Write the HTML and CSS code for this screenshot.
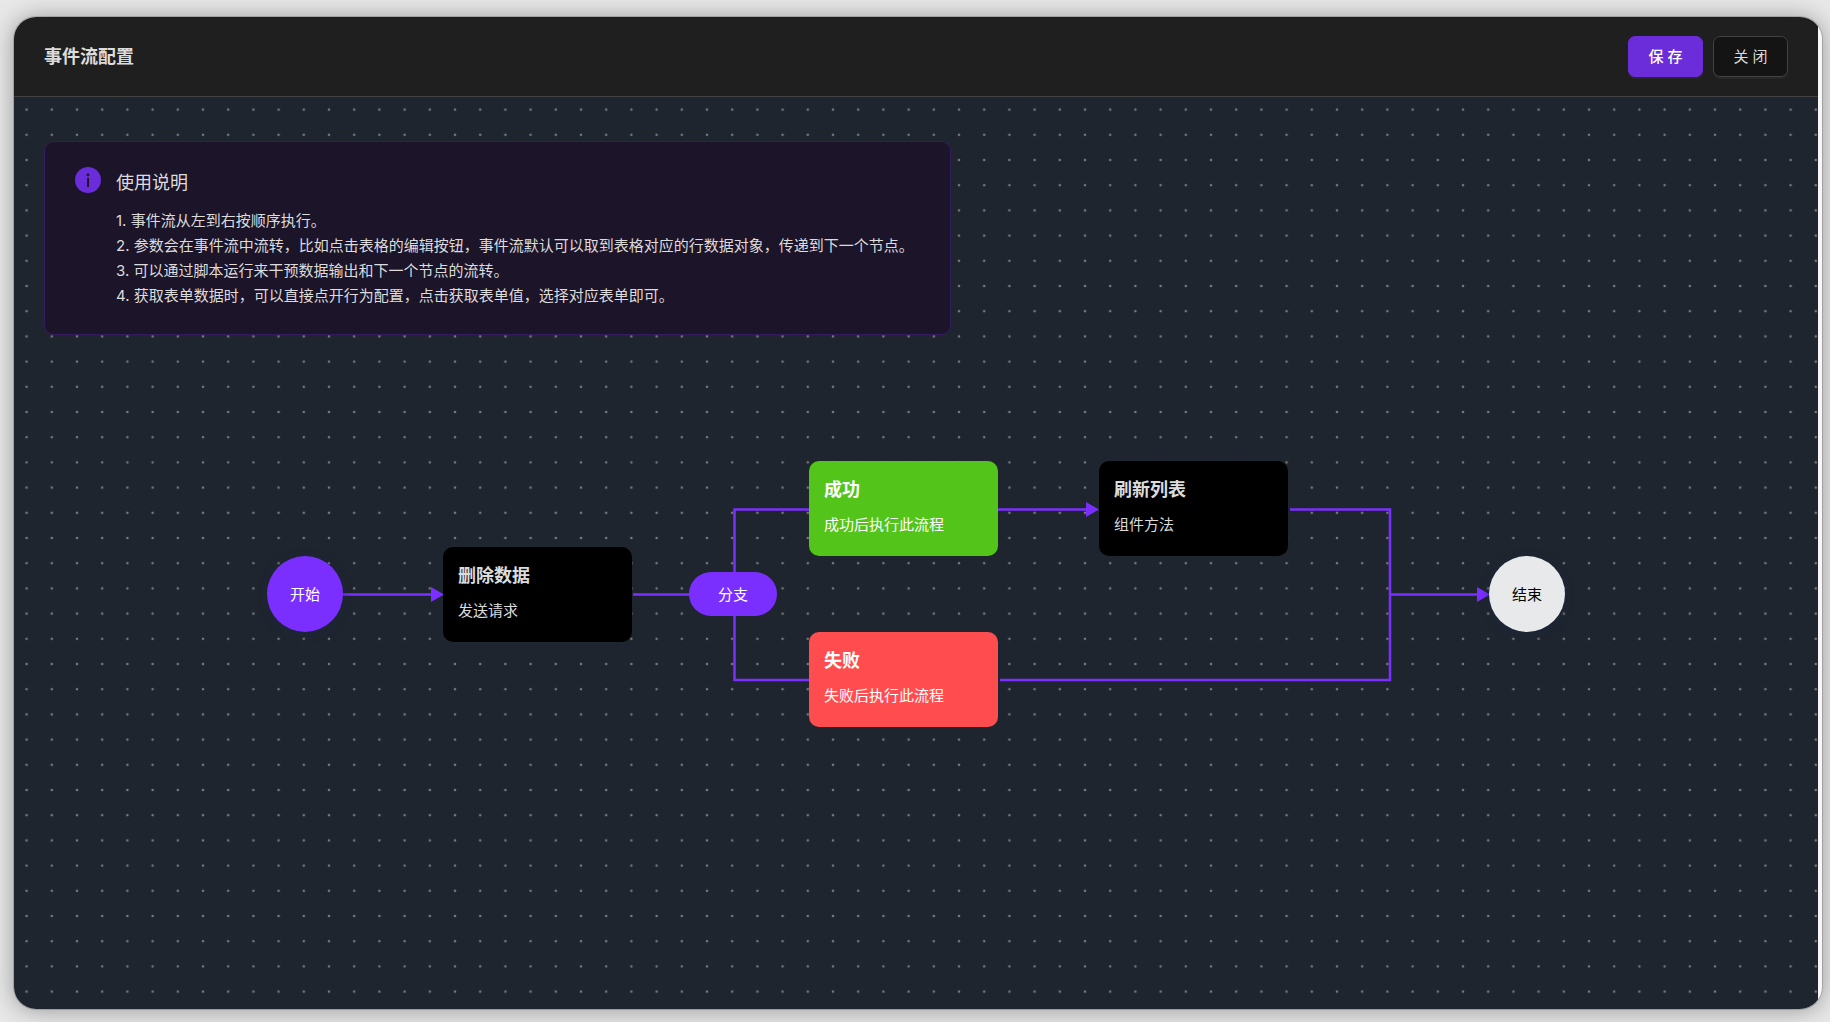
FILE: index.html
```html
<!DOCTYPE html>
<html lang="zh-CN">
<head>
<meta charset="utf-8">
<meta name="viewport" content="width=device-width, initial-scale=1">
<title>事件流配置</title>
<link rel="stylesheet" href="styles.css">
</head>
<body>
<div class="window">
  <header class="header">
    <h1 class="title">事件流配置</h1>
    <div class="actions">
      <button class="btn btn-primary" type="button">保 存</button>
      <button class="btn btn-default" type="button">关 闭</button>
    </div>
  </header>
  <main class="canvas">
    <svg class="layer" aria-hidden="true">
      <defs>
        <pattern id="dots" width="20" height="20" patternUnits="userSpaceOnUse" patternTransform="scale(1.26)">
          <circle cx="10" cy="10" r="1" fill="#7a7a78"/>
        </pattern>
      </defs>
      <rect width="100%" height="100%" fill="url(#dots)"/>
    </svg>

    <section class="notice">
      <svg class="notice-icon" viewBox="0 0 26 26" aria-hidden="true">
        <circle cx="13" cy="13" r="13" fill="currentColor"/>
        <circle class="notice-mark" cx="13" cy="8" r="1.400"/>
        <rect class="notice-mark" x="12" y="11" width="2" height="9"/>
      </svg>
      <div class="notice-body">
        <h2 class="notice-title">使用说明</h2>
        <p class="line">1. 事件流从左到右按顺序执行。</p>
        <p class="line">2. 参数会在事件流中流转，比如点击表格的编辑按钮，事件流默认可以取到表格对应的行数据对象，传递到下一个节点。</p>
        <p class="line">3. 可以通过脚本运行来干预数据输出和下一个节点的流转。</p>
        <p class="line">4. 获取表单数据时，可以直接点开行为配置，点击获取表单值，选择对应表单即可。</p>
      </div>
    </section>

    <svg class="layer edges" aria-hidden="true">
      <path class="edge" d="M328 497.500H418M619 497.500H676M720.500 476V412.500H796M720.500 518V583H796M984 412.500H1074M1276 412.500H1376V583H986M1376 497.500H1464"/>
      <path class="arrow" d="M417 490l13 7.500-13 7.500zM1072 405l13 7.500-13 7.500zM1463 490l13 7.500-13 7.500z"/>
    </svg>
    <div class="node round start">开始</div>
    <div class="node card request"><h3 class="card-title">删除数据</h3><p class="card-text">发送请求</p></div>
    <button class="node branch" type="button">分支</button>
    <div class="node card success"><h3 class="card-title">成功</h3><p class="card-text">成功后执行此流程</p></div>
    <div class="node card failure"><h3 class="card-title">失败</h3><p class="card-text">失败后执行此流程</p></div>
    <div class="node card refresh"><h3 class="card-title">刷新列表</h3><p class="card-text">组件方法</p></div>
    <div class="node round end">结束</div>
  </main>
</div>
</body>
</html>
```
FILE: styles.css
```css
* { box-sizing: border-box; }

body {
  display: flex;
  min-height: 100vh;
  margin: 0;
  padding: 17px 8px 13px 14px;
  background: #e8e8e8;
  color: #dcdcdd;
  font-family: Inter, "Noto Sans CJK SC", sans-serif;
  font-size: 15px;
  line-height: 25px;
}

h1, h2, h3, p { margin: 0; }
button { font: inherit; }

.window {
  display: flex;
  flex: 1;
  flex-direction: column;
  min-width: 0;
  padding-right: 4px;
  overflow: hidden;
  border-radius: 22px;
  background: #f7f7f7;
  box-shadow: 0 0 0 1px rgba(0, 0, 0, 0.16), 0 1px 24px rgba(0, 0, 0, 0.36);
}

.header {
  display: flex;
  align-items: center;
  justify-content: space-between;
  height: 80px;
  padding: 0 30px 1px;
  border-bottom: 1px solid #424242;
  background: #1f1f1f;
}

.title { font-size: 18px; font-weight: 700; }
.actions { display: flex; gap: 10px; }

.btn {
  width: 75px;
  height: 41px;
  padding: 0;
  border: 1px solid #424242;
  border-radius: 7px;
  box-shadow: 0 2px 0 rgba(255, 255, 255, 0.04);
}
.btn-primary { border-color: #6b2cda; background: #6b2cda; color: #fff; font-weight: 500; }
.btn-default { background: #141414; color: #dcdcdc; }

.canvas {
  position: relative;
  flex: 1;
  padding: 44px 30px;
  background: #1f252f;
}

.layer {
  position: absolute;
  inset: 0;
  width: 100%;
  height: 100%;
}

.notice {
  position: relative;
  display: flex;
  gap: 15px;
  width: 907px;
  max-width: 100%;
  padding: 25px 30px;
  border: 1px solid #351b64;
  border-radius: 10px;
  background: #1c1429;
}
.notice-icon { flex: none; width: 26px; height: 26px; color: #6b2cda; }
.notice-mark { fill: #1c1429; }
.notice-body { min-width: 0; padding-bottom: 1px; }
.notice-title { margin: 3px 0 12px; font-size: 18px; font-weight: 400; line-height: 26px; }

.edges { overflow: hidden; }
.edge { fill: none; stroke: #7b2fff; stroke-width: 2.5; }
.arrow { fill: #7b2fff; }

/* Flow nodes, placed on the free canvas */
.node { position: absolute; }

.round {
  display: flex;
  align-items: center;
  justify-content: center;
  width: 76px;
  height: 76px;
  border-radius: 50%;
  box-shadow: 0 2px 8px rgba(24, 40, 72, 0.5);
}
.start { left: 253px; top: 459px; background: #7b2fff; color: #fff; }
.end { left: 1475px; top: 459px; background: #e8e9eb; color: #000; }

.branch {
  left: 675px;
  top: 475px;
  width: 88px;
  height: 44px;
  padding: 0;
  border: 0;
  border-radius: 22px;
  background: #7b2fff;
  color: #fff;
}

.card {
  width: 189px;
  height: 95px;
  padding: 16px 15px;
  border-radius: 10px;
  background: #000;
}
.card-title { margin-bottom: 9px; font-size: 18px; font-weight: 700; line-height: 26px; }

.request { left: 429px; top: 450px; }
.success { left: 795px; top: 364px; background: #52c41a; color: #fff; }
.failure { left: 795px; top: 535px; background: #ff4d4f; color: #fff; }
.refresh { left: 1085px; top: 364px; }
```
